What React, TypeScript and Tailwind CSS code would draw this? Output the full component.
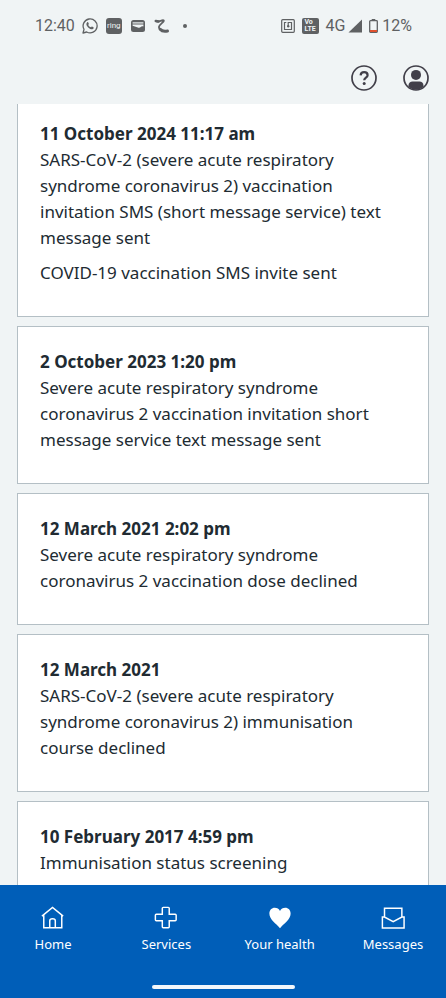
import React from "react";

type HealthRecord = { date: string; paragraphs: string[] };

const records: HealthRecord[] = [
  {
    date: "11 October 2024 11:17 am",
    paragraphs: [
      "SARS-CoV-2 (severe acute respiratory syndrome coronavirus 2) vaccination invitation SMS (short message service) text message sent",
      "COVID-19 vaccination SMS invite sent",
    ],
  },
  {
    date: "2 October 2023 1:20 pm",
    paragraphs: [
      "Severe acute respiratory syndrome coronavirus 2 vaccination invitation short message service text message sent",
    ],
  },
  {
    date: "12 March 2021 2:02 pm",
    paragraphs: ["Severe acute respiratory syndrome coronavirus 2 vaccination dose declined"],
  },
  {
    date: "12 March 2021",
    paragraphs: [
      "SARS-CoV-2 (severe acute respiratory syndrome coronavirus 2) immunisation course declined",
    ],
  },
  { date: "10 February 2017 4:59 pm", paragraphs: ["Immunisation status screening"] },
];

function StatusBar() {
  return (
    <div className="flex h-[52px] shrink-0 items-center justify-between pr-[34px] pl-[35px] font-[Roboto,sans-serif] text-base text-[#5f6163]">
      <div className="flex items-center">
        <span>12:40</span>
        <svg className="ml-[7px] size-4" viewBox="0 0 16 16" fill="none" stroke="currentColor" aria-hidden="true">
          <path d="M1 15l1-3.700A7 7 0 1 1 4.700 14z" strokeWidth="1.300" strokeLinejoin="round" />
          <path
            d="M5.200 4.200c.5-.3.9-.1 1.100.4l.5 1.100c.1.4-.5.9-.6 1.200.6 1.100 1.500 1.900 2.700 2.400.4-.1.8-.9 1.200-.8l1.300.7c.7.4.1 1.600-.5 1.900-1.200.6-2.900-.1-4.100-1.100S4.600 7.600 4.400 6.400c-.1-.8.2-1.700.8-2.200z"
            fill="currentColor"
            stroke="none"
          />
        </svg>
        <span className="ml-2 flex size-4 items-center justify-center rounded-[3px] bg-[#5f6163] text-[8px] leading-none text-[#f0f4f5]">
          ring
        </span>
        <svg className="ml-2 size-4" viewBox="0 0 16 16" aria-hidden="true">
          <rect x="1" y="2" width="14" height="12" rx="2.500" fill="currentColor" />
          <path d="M2.600 4.900h10.800" fill="none" stroke="#f0f4f5" strokeWidth="1.200" />
          <path d="M2.600 6.600h10.800v1.800c-1.500-.2-2.300.2-3 .9-.8.600-1.600.500-2.600.1L2.600 7.800z" fill="#f0f4f5" />
        </svg>
        <svg className="ml-2 size-4" viewBox="0 0 16 16" fill="none" stroke="currentColor" strokeLinecap="round" aria-hidden="true">
          <path d="M2 3.200c3 1.300 5.500-1.500 7.500-.9 1.800 1.200-4.500 4-4.600 6.700 0 1.500.8 2.300 1.600 2.700" strokeWidth="1.800" />
          <path d="M1.800 3l2.700.5" strokeWidth="2.600" />
          <path d="M6.200 11.300c1.500 1.800 3.800 2.400 7.300 1.700" strokeWidth="3" />
        </svg>
        <span className="ml-[13px] size-1 rounded-full bg-current" />
      </div>
      <div className="flex items-center">
        <svg className="size-[14px]" viewBox="0 0 14 14" fill="none" stroke="currentColor" aria-hidden="true">
          <rect x=".7" y=".7" width="12.600" height="12.600" rx="1" strokeWidth="1.200" />
          <path d="M5.300 3.500H3.500v7h7v-7H7.200v3.500" strokeWidth="1.200" />
          <circle cx="7.200" cy="7.300" r="1.200" fill="currentColor" stroke="none" />
        </svg>
        <span className="ml-[7px] flex h-4 w-[17px] flex-col rounded-[2px] bg-[#5f6163] pt-px pl-[2px] text-[7px] leading-[7px] font-bold text-[#f0f4f5]">
          <span>Vo</span>
          <span>LTE</span>
        </span>
        <span className="ml-[6px]">4G</span>
        <svg className="ml-[3px] size-[14px]" viewBox="0 0 14 14" aria-hidden="true">
          <path d="M14 .5V13.500H.5z" fill="currentColor" />
        </svg>
        <svg className="ml-[7px] h-[14px] w-[9px]" viewBox="0 0 9 14" aria-hidden="true">
          <path d="M2.700 0h3.600v1.600H2.700z" fill="currentColor" />
          <rect x=".7" y="1.700" width="7.600" height="11.600" rx=".8" fill="none" stroke="currentColor" strokeWidth="1.300" />
          <path d="M1 11h7v2H1z" fill="#e0512f" />
        </svg>
        <span className="ml-1">12%</span>
      </div>
    </div>
  );
}

function Header() {
  return (
    <header className="flex h-[52px] shrink-0 items-center justify-end gap-[26px] pr-[17px] text-[#413f49]">
      <button type="button" aria-label="Help">
        <svg className="size-[26px]" viewBox="0 0 26 26" fill="none" stroke="currentColor">
          <circle cx="13" cy="13" r="12" strokeWidth="1.700" />
          <path d="M9.600 10.400c.2-2 1.500-3.200 3.500-3.200s3.500 1.200 3.500 3c0 2.300-3.400 2.600-3.400 5" strokeWidth="2.200" />
          <circle cx="13.200" cy="18.400" r="1.500" fill="currentColor" stroke="none" />
        </svg>
      </button>
      <button type="button" aria-label="Account">
        <svg className="size-[26px]" viewBox="0 0 26 26" fill="currentColor">
          <circle cx="13" cy="13" r="12" fill="none" stroke="currentColor" strokeWidth="1.700" />
          <circle cx="13" cy="9.900" r="5" />
          <path d="M5.500 22v-1.500c0-2.600 1.900-4 4-4h7c2.100 0 4 1.400 4 4V22A12 12 0 0 1 5.500 22z" />
        </svg>
      </button>
    </header>
  );
}

function RecordCard({ record, first }: { record: HealthRecord; first: boolean }) {
  return (
    <article
      className={`border-[#b4bfc5] bg-white px-[22px] pb-[30px] ${first ? "border-x border-b pt-[17px]" : "border pt-[22px]"}`}
    >
      <h2 className="font-bold">{record.date}</h2>
      <div className="flex flex-col gap-[9px]">
        {record.paragraphs.map((text) => (
          <p key={text}>{text}</p>
        ))}
      </div>
    </article>
  );
}

const tabs = [
  {
    label: "Home",
    icon: <path d="M1 11L12.500 1.500 24 11M3 9.500v14h19.500v-14M9.500 23.500V16c0-1.500 1-2.300 3-2.300s3 .8 3 2.300v7.500" />,
  },
  {
    label: "Services",
    icon: (
      <path d="M10 1.500h5.500c.6 0 1 .4 1 1V9H23c.6 0 1 .4 1 1v5c0 .6-.4 1-1 1h-6.500v6.500c0 .6-.4 1-1 1H10c-.6 0-1-.4-1-1V16H2.500c-.6 0-1-.4-1-1v-5c0-.6.4-1 1-1H9V2.500c0-.6.4-1 1-1z" />
    ),
  },
  {
    label: "Your health",
    icon: (
      <path
        d="M13 24C9 19 1.500 14.500 1.500 8.300 1.500 4.500 4 2 7.300 2c2.500 0 4.700 1.300 5.700 3.500C14 3.300 16.200 2 18.700 2c3.300 0 5.800 2.500 5.800 6.300C24.500 14.500 17 19 13 24z"
        fill="currentColor"
        stroke="none"
      />
    ),
  },
  {
    label: "Messages",
    icon: <path d="M3.800 12.500V2.500h18.800v10M3.800 12H1.500v11.800H25V12h-2.400L13.200 17z" />,
  },
];

function TabBar() {
  return (
    <nav className="shrink-0 bg-[#005eb8] pt-[21px] text-white">
      <ul className="flex justify-between px-[13px]">
        {tabs.map((tab) => (
          <li key={tab.label} className="w-20">
            <a href="#" className="flex flex-col items-center gap-1 text-[13px] leading-5 whitespace-nowrap">
              <svg className="size-6" viewBox="0 0 26 26" fill="none" stroke="currentColor" strokeWidth="1.600" aria-hidden="true">
                {tab.icon}
              </svg>
              {tab.label}
            </a>
          </li>
        ))}
      </ul>
      <div className="mx-auto mt-[31px] mb-[9px] h-1 w-[143px] rounded-full bg-[#f3f7fb]" />
    </nav>
  );
}

export default function App() {
  return (
    <div className="flex h-screen flex-col bg-[#f0f4f5] font-['Noto_Sans',sans-serif] text-[#212b32]">
      <StatusBar />
      <Header />
      <main className="min-h-0 flex-1 overflow-y-auto px-[17px] text-[17px] leading-[26px] [scrollbar-width:none]">
        <div className="flex flex-col gap-[9px]">
          {records.map((record, index) => (
            <RecordCard key={record.date} record={record} first={index === 0} />
          ))}
        </div>
      </main>
      <TabBar />
    </div>
  );
}
